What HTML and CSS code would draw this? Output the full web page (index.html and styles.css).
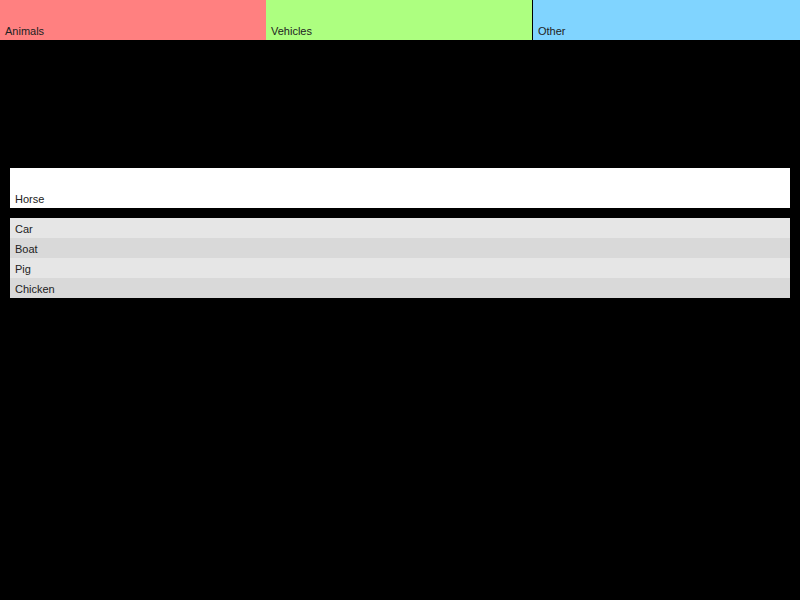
FILE: index.html
```html
<!DOCTYPE html>
<html lang="en">
<head>
    <meta charset="UTF-8">
    <meta name="viewport" content="width=device-width, initial-scale=1.0">
    <title>Sort Items</title>
    <link rel="stylesheet" href="styles.css">
</head>
<body>
    <div class="categories">
        <div class="category animals">Animals</div>
        <div class="category vehicles">Vehicles</div>
        <div class="category other">Other</div>
    </div>

    <div class="board">
        <div class="current-item">Horse</div>

        <ul class="item-list">
            <li>Car</li>
            <li>Boat</li>
            <li>Pig</li>
            <li>Chicken</li>
        </ul>
    </div>
</body>
</html>
```

FILE: styles.css
```css
* {
    margin: 0;
    padding: 0;
    box-sizing: border-box;
}

body {
    background: #000;
    font-family: 'Liberation Sans', Arial, sans-serif;
    font-size: 11px;
    color: #222;
    width: 800px;
    height: 600px;
}

.categories {
    display: flex;
    height: 40px;
}

.category {
    display: flex;
    align-items: flex-end;
    padding: 0 5px 2px;
    width: 266px;
    line-height: 13px;
}

.animals {
    background: #ff8080;
}

.vehicles {
    background: #adff80;
}

.other {
    background: #80d4ff;
    margin-left: 1px;
    flex: 1;
}

.board {
    padding: 128px 10px 0;
}

.current-item {
    background: #fff;
    height: 40px;
    display: flex;
    align-items: flex-end;
    padding: 0 5px 2px;
    line-height: 13px;
}

.item-list {
    list-style: none;
    margin-top: 10px;
}

.item-list li {
    height: 20px;
    line-height: 20px;
    padding: 1px 5px 0;
    background: #e6e6e6;
}

.item-list li:nth-child(even) {
    background: #d9d9d9;
}
```
